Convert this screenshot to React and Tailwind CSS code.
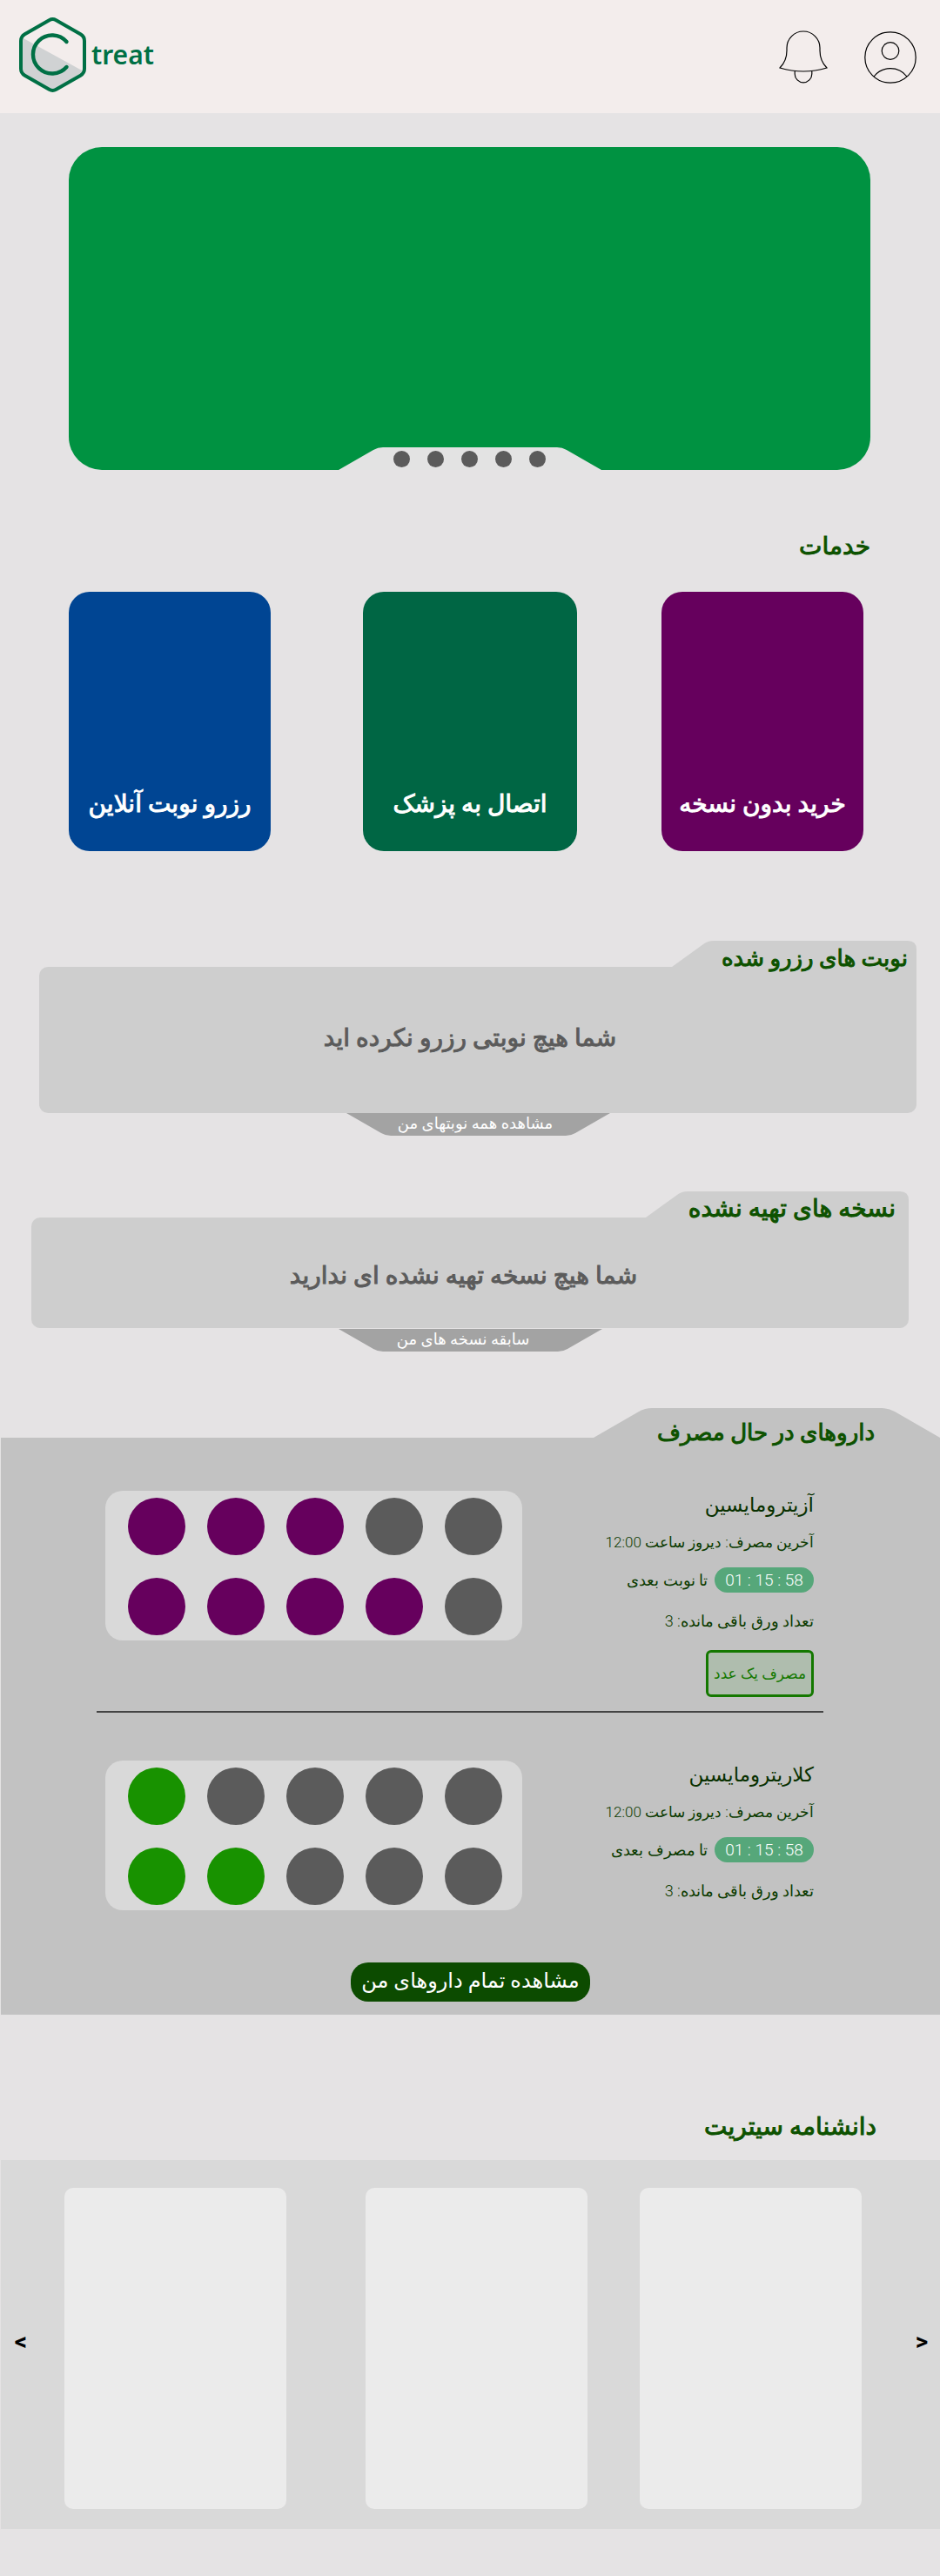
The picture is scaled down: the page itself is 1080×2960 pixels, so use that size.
import React from "react";

function Logo() {
  return (
    <a href="#" className="flex items-center gap-[6px]">
      <svg width="77" height="90" viewBox="0 0 77 90" fill="none" aria-hidden="true">
        <path d="M3 23 L74 62 L42 82 Q38.500 84 35 82 L6 65 Q3 63 3 59 Z" fill="#d0d2d3" />
        <path
          d="M34.500 3.200 Q38.500 .900 42.500 3.200 L70.500 19.300 Q75 22 75 27 V59 Q75 64 70.500 66.700 L42.500 82.800 Q38.500 85.100 34.500 82.800 L6.500 66.700 Q2 64 2 59 V27 Q2 22 6.500 19.300 Z"
          stroke="#007045"
          strokeWidth="4"
        />
        <path d="M54.500 28 A22 22 0 1 0 54.500 57" stroke="#007045" strokeWidth="4.400" strokeLinecap="round" />
      </svg>
      <span className="pb-1 font-['Noto_Sans'] text-[30px] leading-[40px] font-semibold text-[#007045]">treat</span>
    </a>
  );
}

function BellIcon() {
  return (
    <svg width="56" height="62" viewBox="0 0 56 62" fill="none" stroke="#000" strokeWidth="1.200" aria-hidden="true">
      <path d="M1 44 C6 39 9 32 9 24 V21 A19 19 0 0 1 47 21 V24 C47 32 50 39 55 44 Q28 52 1 44 Z" />
      <path d="M18.200 48 V51 A9.800 9.800 0 0 0 37.800 51 V48" />
    </svg>
  );
}

function UserIcon() {
  return (
    <svg width="60" height="62" viewBox="0 0 60 62" fill="none" stroke="#000" strokeWidth="1.200" aria-hidden="true">
      <circle cx="30" cy="32" r="29.200" />
      <circle cx="30" cy="24.500" r="9.800" />
      <path d="M11 54 A24 24 0 0 1 49 54" />
    </svg>
  );
}

function Header() {
  return (
    <header dir="ltr" className="flex items-center justify-between bg-[#f3edec] py-5 pr-[27px] pl-[22px]">
      <Logo />
      <div className="flex items-center gap-[42px]">
        <button aria-label="اعلان ها"><BellIcon /></button>
        <button aria-label="حساب کاربری"><UserIcon /></button>
      </div>
    </header>
  );
}

function Hero() {
  return (
    <section className="mt-[39px] mr-20 ml-[79px] flex h-[371px] flex-col items-center justify-end rounded-[38px] bg-[#009241]">
      <div className="relative flex h-[26px] w-[302px] justify-center gap-5 pt-1">
        <svg className="absolute inset-0" width="302" height="26" viewBox="0 0 302 26" aria-hidden="true">
          <path d="M0 26 L40 3 Q45 0 51 0 H251 Q257 0 262 3 L302 26 Z" fill="#e3e3e3" />
        </svg>
        {[1, 2, 3, 4, 5].map((n) => (
          <button key={n} aria-label={`اسلاید ${n}`} className="relative size-[19px] rounded-full bg-[#5b5b5b]" />
        ))}
      </div>
    </section>
  );
}

const services = [
  { name: "خرید بدون نسخه", style: "grow-[232] bg-[#66005d]" },
  { name: "اتصال به پزشک", style: "ms-[97px] grow-[246] bg-[#006644]" },
  { name: "رزرو نوبت آنلاین", style: "ms-[106px] grow-[232] bg-[#004593]" },
];

function Services() {
  return (
    <section className="mt-[68px] pr-[88px] pl-[79px]">
      <h2 className="-mr-[8px] text-[28px] leading-[40px] text-[#0d5200] [-webkit-text-stroke:1px]">خدمات</h2>
      <div className="mt-8 flex">
        {services.map((s) => (
          <a
            key={s.name}
            href="#"
            className={`flex h-[298px] basis-0 items-end justify-center rounded-3xl pb-[34px] text-[28px] leading-[40px] whitespace-nowrap text-white [-webkit-text-stroke:1px] ${s.style}`}
          >
            {s.name}
          </a>
        ))}
      </div>
    </section>
  );
}

function TabPanel({ title, message, link, tabWidth, className, tabClass, bodyClass, linkClass }) {
  return (
    <section className={className}>
      <div className={`relative h-[30px] ${tabClass}`}>
        <svg className="absolute inset-0 size-full" viewBox={`0 0 ${tabWidth} 30`} aria-hidden="true">
          <path d={`M0 30 L36 4 Q41 0 48 0 H${tabWidth - 10} Q${tabWidth} 0 ${tabWidth} 10 V30 Z`} fill="#cecece" />
        </svg>
        <h2 className="relative leading-[40px] whitespace-nowrap text-[#0d5200] [-webkit-text-stroke:1px]">{title}</h2>
      </div>
      <div className={`flex justify-center rounded-[10px] rounded-tr-none bg-[#cecece] text-[28px] leading-[40px] text-[#5b5b5b] [-webkit-text-stroke:1px] ${bodyClass}`}>
        {message}
      </div>
      <a href="#" className={`relative mx-auto flex h-[26px] w-[303px] justify-center text-[18px] leading-[24px] text-white ${linkClass}`}>
        <svg className="absolute inset-0" width="303" height="26" viewBox="0 0 303 26" aria-hidden="true">
          <path d="M0 0 L40 23 Q45 26 51 26 H252 Q258 26 263 23 L303 0 Z" fill="#a3a3a3" />
        </svg>
        <span className="relative">{link}</span>
      </a>
    </section>
  );
}

function Blister({ rows, color }) {
  return (
    <div className="grid grid-cols-5 gap-x-[25px] gap-y-[26px] rounded-[20px] bg-[#d9d9d9] pt-2 pr-[23px] pb-[6px] pl-[26px]">
      {rows.flatMap((filled, r) =>
        [0, 1, 2, 3, 4].map((i) => (
          <span key={`${r}-${i}`} className={`size-[66px] rounded-full ${i < filled ? color : "bg-[#5b5b5b]"}`} />
        ))
      )}
    </div>
  );
}

function Drug({ name, next, rows, color, action }) {
  return (
    <div className="flex items-start justify-between pr-[145px] pl-[120px]">
      <div className="flex flex-col items-start text-[18px] leading-[28px] text-[#0b3b00]">
        <h3 className="pt-px text-[23px] leading-[32px] text-[#083000]">{name}</h3>
        <p className="mt-3 text-[17px] font-light">آخرین مصرف: دیروز ساعت 12:00</p>
        <p className="mt-[15px] flex items-center gap-2 font-light">
          <span dir="ltr" className="w-[114px] rounded-full bg-[#56a77a] text-center text-[19px] leading-[29px] whitespace-pre text-white">
            01 : 15 : 58
          </span>
          {next}
        </p>
        <p className="mt-[19px] font-light">تعداد ورق باقی مانده: 3</p>
        {action && (
          <button className="mt-[19px] h-[54px] rounded-md border-3 border-[#147800] bg-[#afbdae] px-[6px] text-[17px] text-[#147800]">
            {action}
          </button>
        )}
      </div>
      <div dir="ltr"><Blister rows={rows} color={color} /></div>
    </div>
  );
}

function Medicines() {
  return (
    <section className="mt-[65px]">
      <div className="relative h-[34px] w-[398px] pr-[75px]">
        <svg className="absolute inset-0" width="398" height="34" viewBox="0 0 398 34" aria-hidden="true">
          <path d="M0 34 L52 4 Q59 0 67 0 H331 Q339 0 346 4 L398 34 Z" fill="#c2c2c2" />
        </svg>
        <h2 className="relative pt-2 text-[26px] leading-[40px] whitespace-nowrap text-[#0d5200] [-webkit-text-stroke:1px]">داروهای در حال مصرف</h2>
      </div>
      <div className="ml-px bg-[#c2c2c2] pt-[61px] pb-[15px]">
        <Drug name="آزیترومایسین" next="تا نوبت بعدی" rows={[3, 4]} color="bg-[#66005d]" action="مصرف یک عدد" />
        <hr className="mt-4 mr-[134px] mb-[55px] ml-[110px] border-t-2 border-[#444]" />
        <Drug name="کلاریترومایسین" next="تا مصرف بعدی" rows={[1, 2]} color="bg-[#189200]" />
        <div className="mt-[60px] flex justify-center">
          <button className="h-[45px] rounded-[20px] bg-[#0c4b00] px-3 pb-1 text-[24px] leading-[40px] text-white">
            مشاهده تمام داروهای من
          </button>
        </div>
      </div>
    </section>
  );
}

function Encyclopedia() {
  return (
    <section className="mt-[109px] pb-[54px]">
      <h2 className="pr-[73px] text-[28px] leading-[40px] text-[#0d5200] [-webkit-text-stroke:1px]">دانشنامه سیتریت</h2>
      <div dir="ltr" className="mt-[18px] ml-px flex items-center bg-[#d9d9d9] pt-8 pr-3 pb-[23px] pl-[14px] text-[28px] leading-[32px] font-bold text-black">
        <button aria-label="قبلی" className="w-[18px] pb-4">&lt;</button>
        <article className="ml-[41px] h-[369px] flex-1 rounded-[10px] bg-[#ebebeb]" />
        <article className="ml-[91px] h-[369px] flex-1 rounded-[10px] bg-[#ebebeb]" />
        <article className="mr-[60px] ml-[60px] h-[369px] flex-1 rounded-[10px] bg-[#ebebeb]" />
        <button aria-label="بعدی" className="w-[18px] pb-4">&gt;</button>
      </div>
    </section>
  );
}

export default function App() {
  return (
    <div dir="rtl" className="bg-[#e5e3e4] font-[Roboto,'DejaVu_Sans',sans-serif] font-medium">
      <Header />
      <main>
        <Hero />
        <Services />
        <TabPanel
          title="نوبت های رزرو شده"
          message="شما هیچ نوبتی رزرو نکرده اید"
          link="مشاهده همه نوبتهای من"
          tabWidth={281}
          className="mt-[103px] mr-[27px] ml-[45px]"
          tabClass="w-[281px] pr-[10px] text-[26px]"
          bodyClass="pt-[62px] pr-[18px] pb-[66px]"
          linkClass="pr-[6px]"
        />
        <TabPanel
          title="نسخه های تهیه نشده"
          message="شما هیچ نسخه تهیه نشده ای ندارید"
          link="سابقه نسخه های من"
          tabWidth={302}
          className="mt-16 mr-9 ml-9"
          tabClass="w-[302px] pr-[15px] text-[28px]"
          bodyClass="pt-[47px] pr-[15px] pb-10"
          linkClass="mt-px pr-4"
        />
        <Medicines />
        <Encyclopedia />
      </main>
    </div>
  );
}
